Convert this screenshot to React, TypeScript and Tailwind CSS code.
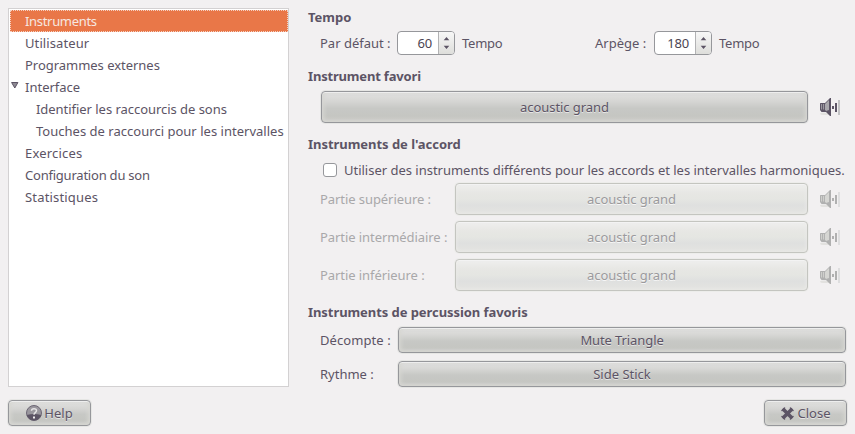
import type { ReactNode } from "react";

const BTN =
  "flex items-center justify-center rounded-[4px] border border-[#96979b] bg-[linear-gradient(to_bottom,#e2e2e1_0%,#d6d6d4_30%,#c7c8c5_55%,#c5c6c2_80%,#cfcfcb_100%)] shadow-[0_0_0_1px_#e6e6e4,inset_0_1px_0_#eeeeee,inset_2px_0_4px_#d6d6d2,inset_-2px_0_4px_#d6d6d2] [text-shadow:0_1px_0_#e6e6e6]";
const BTN_OFF =
  "flex items-center justify-center rounded-[4px] border border-[#c4c5c0] bg-[linear-gradient(to_bottom,#efefee_0%,#e7e7e4_30%,#e5e6e2_50%,#dfe0df_70%,#e4e4e1_100%)] text-[#9b9a9d] shadow-[0_0_0_1px_#ededeb,inset_0_1px_0_#f3f3f3,inset_0_0_4px_#ecece9] [text-shadow:0_1px_0_#f6f6f6]";

function Heading({ children, className }: { children: ReactNode; className: string }) {
  return <h2 className={`flex h-[20px] items-center font-bold ${className}`}>{children}</h2>;
}

function Speaker({ off = false }: { off?: boolean }) {
  const dark = off ? "#b0b0b0" : "#5c5465";
  const mid = off ? "#d6d6d3" : "#a9a7ac";
  const bar = off ? "#dededf" : "#c3c3c5";
  return (
    <svg width="21" height="20" viewBox="0 0 21 20" className="block shrink-0">
      <ellipse cx="5" cy="16.8" rx="5" ry="1.2" fill="#e2e1df" />
      <path d="M.5 6H5L10 1h1v18h-1l-4-4H1.5L0 13V6.5z" fill={dark} />
      <path d="M5 7l4-4v13l-4-3z" fill={mid} />
      <path d="M1.6 7v5.5M3.6 7v5.5" stroke={mid} strokeWidth=".9" />
      <path d="M6 14l3-1v4z" fill={dark} />
      <path d="M12 9h2v3h-2zM15 6h2v9h-2z" fill={dark} />
      <path d="M18 3h2v15h-2z" fill={bar} />
    </svg>
  );
}

function Spin({ value }: { value: string }) {
  return (
    <div className="flex h-[24px] w-[58px] overflow-hidden rounded-[4px] border border-[#96979b] bg-white">
      <span className="flex flex-1 items-center justify-end pr-[6px] tracking-[-0.2px] text-[#4b4452]">{value}</span>
      <span className="flex w-[16px] items-center justify-center border-l border-[#b2b2b4] bg-gradient-to-b from-[#f7f7f7] to-[#dededb]">
        <svg width="7" height="14" viewBox="0 0 7 14">
          <path d="M.7 4.2 3.5 1 6.3 4.2zM.7 9.8h5.6L3.5 13z" fill="#5c5465" />
        </svg>
      </span>
    </div>
  );
}

const TREE = [
  { label: "Instruments", cls: "bg-[#e97748] text-[#f6e7e1] outline-1 outline-dotted outline-[#f5d2c3] -outline-offset-1 pl-[15px] tracking-[-0.32px]" },
  { label: "Utilisateur", cls: "pl-[15px] tracking-[0.1px]" },
  { label: "Programmes externes", cls: "pl-[15px] tracking-[-0.03px]" },
  { label: "Interface", cls: "pl-[1px]", open: true },
  { label: "Identifier les raccourcis de sons", cls: "pl-[26px] tracking-[-0.04px]" },
  { label: "Touches de raccourci pour les intervalles", cls: "pl-[26px] tracking-[0.02px]" },
  { label: "Exercices", cls: "pl-[15px] tracking-[0.2px]" },
  { label: "Configuration du son", cls: "pl-[15px] tracking-[-0.22px]" },
  { label: "Statistiques", cls: "pl-[15px] tracking-[0.17px]" },
];

const PARTS = ["Partie supérieure :", "Partie intermédiaire :", "Partie inférieure :"];

export default function App() {
  return (
    <div className="flex h-[434px] w-[855px] flex-col overflow-hidden bg-[#f2f0f1] font-['Noto_Sans',sans-serif] text-[13px] leading-[20px] whitespace-nowrap text-[#5c5465]">
      <main className="flex h-[392px] pt-[8px] pl-[8px]">
        <nav className="h-[379px] w-[281px] border border-[#d3d1d2] bg-white pt-px pl-px">
          {TREE.map((t) => (
            <div key={t.label} className={`flex h-[22px] items-center ${t.cls}`}>
              {t.open && (
                <svg width="8" height="7" viewBox="0 0 8 7" className="mr-[6px] -mt-[3px]">
                  <path d="M.6.5h6.3L3.8 6z" fill="#8d8a93" stroke="#5c5465" />
                </svg>
              )}
              {t.label}
            </div>
          ))}
        </nav>

        <section className="ml-[19px] w-[539px]">
          <Heading className="-mt-px">Tempo</Heading>
          <div className="mt-[4px] flex h-[24px] items-center pl-[12px]">
            <span className="w-[77px]">Par défaut :</span>
            <Spin value="60" />
            <span className="ml-[7px] w-[133px] tracking-[-0.25px]">Tempo</span>
            <span className="w-[59px]">Arpège :</span>
            <Spin value="180" />
            <span className="ml-[7px] tracking-[-0.25px]">Tempo</span>
          </div>

          <Heading className="mt-[11px] tracking-[-0.18px]">Instrument favori</Heading>
          <div className="mt-[5px] flex h-[32px] items-center pl-[13px]">
            <button className={`h-[32px] w-[487px] tracking-[-0.07px] ${BTN}`}>acoustic grand</button>
            <span className="ml-[12px]"><Speaker /></span>
          </div>

          <Heading className="mt-[11px] tracking-[-0.04px]">Instruments de l'accord</Heading>
          <label className="mt-[6px] flex h-[20px] items-center pl-[15px] tracking-[-0.015px]">
            <span className="mr-[7px] size-[14px] rounded-[3px] border border-[#96979b] bg-white" />
            Utiliser des instruments différents pour les accords et les intervalles harmoniques.
          </label>
          <div className="mt-[3px] flex flex-col gap-[6px] pl-[12px] text-[#a9a8aa]">
            {PARTS.map((p) => (
              <div key={p} className="flex h-[32px] items-center">
                <span className="w-[135px] tracking-[-0.07px]">{p}</span>
                <button className={`h-[32px] w-[353px] tracking-[-0.07px] ${BTN_OFF}`}>acoustic grand</button>
                <span className="ml-[12px]"><Speaker off /></span>
              </div>
            ))}
          </div>

          <Heading className="mt-[11px] tracking-[-0.07px]">Instruments de percussion favoris</Heading>
          <div className="mt-[5px] flex flex-col gap-[8px] pl-[12px]">
            <div className="flex h-[26px] items-center">
              <span className="w-[78px] tracking-[0.08px]">Décompte :</span>
              <button className={`h-[26px] w-[448px] tracking-[-0.1px] ${BTN}`}>Mute Triangle</button>
            </div>
            <div className="flex h-[26px] items-center">
              <span className="w-[78px]">Rythme :</span>
              <button className={`h-[26px] w-[448px] ${BTN}`}>Side Stick</button>
            </div>
          </div>
        </section>
      </main>

      <footer className="mt-[8px] flex justify-between pr-[8px] pl-[8px]">
        <button className={`h-[26px] w-[83px] gap-[2px] ${BTN}`}>
          <svg width="16" height="16" viewBox="0 0 16 16">
            <circle cx="8" cy="8" r="7.5" fill="#9a979e" stroke="#6c6674" />
            <path d="M.8 10Q8 8 15.2 10A7.5 7.5 0 0 1 .8 10z" fill="#5c5465" />
            <path d="M5.5 5.8C5.5 3 10.5 3 10.5 5.6 10.5 7.6 8 7.6 8 9.8" fill="none" stroke="#e6e5e6" strokeWidth="1.5" />
            <path d="M7 11.5h2v2H7z" fill="#f2f0f1" />
          </svg>
          Help
        </button>
        <button className={`h-[26px] w-[83px] gap-[4px] ${BTN}`}>
          <svg width="13" height="13" viewBox="0 0 13 13">
            <path d="M3 3 10 10M10 3 3 10" stroke="#5c5465" strokeWidth="3.6" strokeLinecap="round" />
            <path d="M1 3.5 3.5 1M9.5 1 12 3.5M1 9.5 3.5 12M9.5 12 12 9.5" stroke="#5c5465" strokeWidth="1.5" strokeLinecap="round" />
          </svg>
          Close
        </button>
      </footer>
    </div>
  );
}
